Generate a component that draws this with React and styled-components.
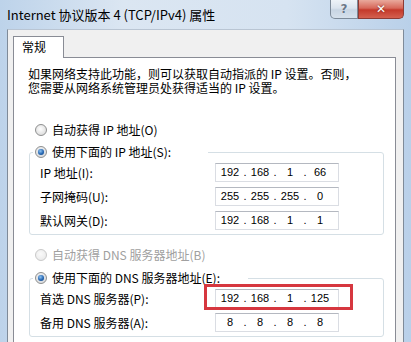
import React from "react";
import styled, { createGlobalStyle } from "styled-components";

const GlobalStyle = createGlobalStyle`
  html, body {
    margin: 0;
    padding: 0;
    overflow: hidden;
    background: #fff;
  }
  body {
    font-family: "Noto Sans CJK SC", "Liberation Sans", sans-serif;
    color: #000;
  }
`;

const Window = styled.div`
  width: 411px;
  height: 342px;
  overflow: hidden;
  box-sizing: border-box;
  padding: 0 7px;
  display: flex;
  flex-direction: column;
  background: linear-gradient(to right, #bdd3ea 0%, #dbe6f2 30%, #d6e3f1 70%, #b9d0e9 100%);
`;

const TitleBar = styled.div`
  height: 29px;
  flex: none;
  display: flex;
  align-items: flex-start;
`;

const Title = styled.div`
  font-size: 13px;
  line-height: 29px;
  white-space: nowrap;
`;

const Buttons = styled.div`
  margin-left: auto;
  display: flex;
`;

const CapButton = styled.div`
  width: ${(p) => (p.$close ? 46 : 28)}px;
  height: 19px;
  box-sizing: border-box;
  display: flex;
  align-items: center;
  justify-content: center;
  border: 1px solid ${(p) => (p.$close ? "#8d3b35" : "#7d8a99")};
  border-top: none;
  border-radius: ${(p) => (p.$close ? "0 0 5px 0" : "0 0 0 5px")};
  background: ${(p) =>
    p.$close
      ? "linear-gradient(to bottom, #e9a99c 0%, #d7685a 45%, #c4392b 55%, #d4604f 100%)"
      : "linear-gradient(to bottom, #eef3f8 0%, #dbe4ee 45%, #c8d5e3 55%, #d6e1ec 100%)"};
  color: ${(p) => (p.$close ? "#fff" : "#6b7888")};
  font-family: "DejaVu Sans", sans-serif;
  font-weight: bold;
  font-size: 12px;
  text-shadow: ${(p) => (p.$close ? "0 0 2px #6b1a12" : "0 0 1px #fff")};
`;

const Client = styled.div`
  flex: 1;
  min-height: 0;
  background: #f0f0f0;
  border-left: 1px solid #7f8b99;
  border-right: 1px solid #7f8b99;
  border-top: 1px solid #b9c5d3;
  padding: 6px 7px 0 5px;
  display: flex;
  flex-direction: column;
`;

const TabStrip = styled.div`
  display: flex;
  position: relative;
  z-index: 1;
`;

const Tab = styled.div`
  width: 51px;
  height: 22px;
  box-sizing: border-box;
  margin-bottom: -1px;
  background: #fff;
  border: 1px solid #898c95;
  border-bottom: none;
  font-size: 12px;
  line-height: 20px;
  padding-left: 8px;
`;

const Panel = styled.div`
  height: 300px;
  flex: none;
  background: #fff;
  border: 1px solid #898c95;
  padding-top: 9px;
`;

const Desc = styled.div`
  margin-left: 14px;
  font-size: 12px;
  line-height: 14px;
  white-space: nowrap;
`;

const RadioRow = styled.div`
  display: flex;
  align-items: center;
  height: 16px;
  padding-left: ${(p) => (p.$legend ? 2 : 21)}px;
  margin-top: ${(p) => p.$top || 0}px;
  font-size: 12px;
  line-height: 16px;
  white-space: nowrap;
  color: ${(p) => (p.$disabled ? "#a0a0a0" : "#000")};
`;

const RadioMark = styled.span`
  width: 12px;
  height: 12px;
  box-sizing: border-box;
  border-radius: 50%;
  margin-right: 5px;
  flex: none;
  display: flex;
  align-items: center;
  justify-content: center;
  border: 1px solid ${(p) => (p.$disabled ? "#c9c9c9" : "#8e8f8f")};
  background: ${(p) =>
    p.$disabled
      ? "radial-gradient(circle at 45% 40%, #fafafa, #e6e6e6)"
      : "radial-gradient(circle at 45% 40%, #ffffff, #d2d2d2)"};
  &::after {
    content: "";
    display: ${(p) => (p.$checked ? "block" : "none")};
    width: 6px;
    height: 6px;
    border-radius: 50%;
    background: radial-gradient(circle at 40% 35%, #8fc4f2 0%, #2566b2 55%, #123f78 100%);
    box-shadow: 0 0 1px #5d8fc8;
  }
`;

const Group = styled.fieldset`
  margin: ${(p) => p.$top}px 0 0 15px;
  width: 355px;
  box-sizing: border-box;
  border: 1px solid #d5dfe5;
  border-radius: 3px;
  padding: 3px 0 4px 10px;
  display: flex;
  flex-direction: column;
  gap: 5px;
  min-width: 0;
`;

const Legend = styled.legend`
  padding: 0;
  margin-left: -7px;
  width: ${(p) => p.$width}px;
  float: none;
`;

const Row = styled.div`
  display: flex;
  align-items: center;
  height: 19px;
`;

const Label = styled.div`
  width: 175px;
  font-size: 12px;
  line-height: 19px;
  white-space: nowrap;
`;

const IpBox = styled.div`
  position: relative;
  width: 124px;
  height: 19px;
  box-sizing: border-box;
  border: 1px solid #dadde3;
  border-top-color: #b4b8c0;
  background: #fff;
  display: flex;
  align-items: center;
  padding-left: 2px;
  font-family: "Liberation Sans", sans-serif;
  font-size: 11px;
`;

const Field = styled.span`
  width: 24px;
  text-align: center;
  line-height: 17px;
`;

const Dot = styled.span`
  width: 6px;
  text-align: center;
  line-height: 17px;
`;

const Highlight = styled.div`
  position: absolute;
  left: -12px;
  top: -6px;
  width: 149px;
  height: 26px;
  box-sizing: border-box;
  border: 3px solid #d6373f;
  pointer-events: none;
`;

function Radio({ checked, disabled, legend, top, children }) {
  return (
    <RadioRow $legend={legend} $top={top} $disabled={disabled}>
      <RadioMark $checked={checked} $disabled={disabled} />
      {children}
    </RadioRow>
  );
}

function IpInput({ value, highlight }) {
  const parts = value.split(".");
  return (
    <IpBox>
      {parts.map((p, i) => (
        <React.Fragment key={i}>
          <Field>{p}</Field>
          {i < parts.length - 1 && <Dot>.</Dot>}
        </React.Fragment>
      ))}
      {highlight && <Highlight />}
    </IpBox>
  );
}

const ipRows = [
  { label: "IP 地址(I):", value: "192.168.1.66" },
  { label: "子网掩码(U):", value: "255.255.255.0" },
  { label: "默认网关(D):", value: "192.168.1.1" },
];

const dnsRows = [
  { label: "首选 DNS 服务器(P):", value: "192.168.1.125", highlight: true },
  { label: "备用 DNS 服务器(A):", value: "8.8.8.8" },
];

export default function App() {
  return (
    <>
      <GlobalStyle />
      <Window>
        <TitleBar>
          <Title>Internet 协议版本 4 (TCP/IPv4) 属性</Title>
          <Buttons>
            <CapButton>?</CapButton>
            <CapButton $close>✕</CapButton>
          </Buttons>
        </TitleBar>
        <Client>
          <TabStrip>
            <Tab>常规</Tab>
          </TabStrip>
          <Panel>
            <Desc>
              如果网络支持此功能，则可以获取自动指派的 IP 设置。否则，
              <br />
              您需要从网络系统管理员处获得适当的 IP 设置。
            </Desc>
            <Radio top={27}>自动获得 IP 地址(O)</Radio>
            <Group $top={6}>
              <Legend $width={175}>
                <Radio checked legend>
                  使用下面的 IP 地址(S):
                </Radio>
              </Legend>
              {ipRows.map((r) => (
                <Row key={r.label}>
                  <Label>{r.label}</Label>
                  <IpInput value={r.value} />
                </Row>
              ))}
            </Group>
            <Radio top={12} disabled>
              自动获得 DNS 服务器地址(B)
            </Radio>
            <Group $top={7}>
              <Legend $width={215}>
                <Radio checked legend>
                  使用下面的 DNS 服务器地址(E):
                </Radio>
              </Legend>
              {dnsRows.map((r) => (
                <Row key={r.label}>
                  <Label>{r.label}</Label>
                  <IpInput value={r.value} highlight={r.highlight} />
                </Row>
              ))}
            </Group>
          </Panel>
        </Client>
      </Window>
    </>
  );
}
